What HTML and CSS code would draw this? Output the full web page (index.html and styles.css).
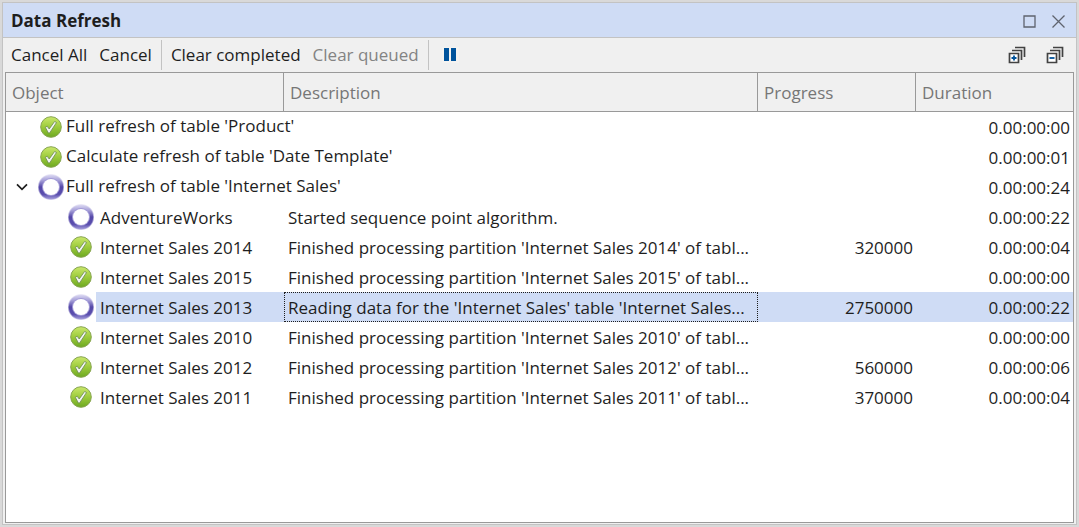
FILE: index.html
```
<!DOCTYPE html>
<html lang="en">
<head>
<meta charset="utf-8">
<title>Data Refresh</title>
<link rel="stylesheet" href="styles.css">
</head>
<body>
<svg class="defs" aria-hidden="true">
  <defs>
    <linearGradient id="green" x1="0" y1="0" x2="0" y2="1">
      <stop offset="0" stop-color="#cbe86c"/><stop offset=".5" stop-color="#9ccb3b"/><stop offset="1" stop-color="#6da821"/>
    </linearGradient>
    <linearGradient id="purple" x1="0" y1="0" x2="0" y2="1">
      <stop offset="0" stop-color="#dcd9f2"/><stop offset=".22" stop-color="#a9a3da"/><stop offset=".5" stop-color="#5548a8"/><stop offset=".8" stop-color="#5a4eae"/><stop offset="1" stop-color="#a59edb"/>
    </linearGradient>
    <symbol id="done" viewBox="0 0 26 26">
      <circle cx="13" cy="13" r="10.3" fill="url(#green)" stroke="#87a550" stroke-width="1"/>
      <path d="M7.300 13.300 9.200 12.200l2 2.800 5.400-7.500 1.900 1-6.900 10.500h-1.200z" fill="#f2f5f2" stroke="#6c8a50" stroke-width=".8" stroke-linejoin="round"/>
    </symbol>
    <symbol id="busy" viewBox="0 0 26 26">
      <circle cx="13" cy="13" r="13" fill="url(#purple)" opacity=".5"/>
      <circle cx="13" cy="13" r="12.200" fill="url(#purple)"/>
      <circle cx="13" cy="13" r="9" fill="#a39bd8"/>
      <circle cx="13" cy="13" r="8" fill="#fff"/>
    </symbol>
  </defs>
</svg>
<main class="window">
  <header class="titlebar">
    <h1 class="title">Data Refresh</h1>
    <button class="caption" aria-label="Maximize"><svg width="13" height="13" viewBox="0 0 13 13"><path d="M1 1h11v11H1z" fill="none" stroke="#5f636e" stroke-width="1.3"/></svg></button>
    <button class="caption" aria-label="Close"><svg width="13" height="13" viewBox="0 0 13 13"><path d="m.5.5 12 12m0-12-12 12" fill="none" stroke="#5f636e" stroke-width="1.3"/></svg></button>
  </header>
  <div class="toolbar">
    <button class="tool">Cancel All</button>
    <button class="tool">Cancel</button>
    <span class="divider"></span>
    <button class="tool">Clear completed</button>
    <button class="tool" disabled>Clear queued</button>
    <span class="divider"></span>
    <button class="tool pause" aria-label="Pause"><svg width="18" height="18" viewBox="0 0 18 18"><path d="M1 1h17v16H1z" fill="#f4f3f1"/><path d="M3 2h5v13H3zM10 2h5v13h-5z" fill="#00539c"/></svg></button>
    <span class="spacer"></span>
    <button class="tool tree" aria-label="Expand all"><svg width="18" height="18" viewBox="0 0 18 18" fill="none"><path d="M1.500 7.500h9v9h-9z" fill="#fff"/><path d="M1.500 7.500h9v9h-9zM4 4.500h9.500V14M7 1.500h9.500V11" stroke="#424242" stroke-width="1.700"/><path d="M3.500 12h5M6 9.500v5" stroke="#00539c" stroke-width="1.800"/></svg></button>
    <button class="tool tree" aria-label="Collapse all"><svg width="18" height="18" viewBox="0 0 18 18" fill="none"><path d="M1.500 7.500h9v9h-9z" fill="#fff"/><path d="M1.500 7.500h9v9h-9zM4 4.500h9.500V14M7 1.500h9.500V11" stroke="#424242" stroke-width="1.700"/><path d="M3.500 12h5" stroke="#00539c" stroke-width="1.800"/></svg></button>
  </div>
  <div class="list">
    <table class="grid">
      <colgroup><col class="c-object"><col><col class="c-progress"><col class="c-duration"></colgroup>
      <thead><tr><th>Object</th><th>Description</th><th>Progress</th><th>Duration</th></tr></thead>
      <tbody>
        <tr class="parent"><td><div class="node"><svg class="icon"><use href="#done"/></svg><span class="name">Full refresh of table 'Product'</span></div></td><td></td><td></td><td>0.00:00:00</td></tr>
        <tr class="parent"><td><div class="node"><svg class="icon"><use href="#done"/></svg><span class="name">Calculate refresh of table 'Date Template'</span></div></td><td></td><td></td><td>0.00:00:01</td></tr>
        <tr class="parent"><td><div class="node open"><button class="chevron" aria-label="Collapse"><svg width="12" height="8" viewBox="0 0 12 8"><path d="m1 1.300 5 5 5-5" fill="none" stroke="#1e1e1e" stroke-width="1.700"/></svg></button><svg class="icon"><use href="#busy"/></svg><span class="name">Full refresh of table 'Internet Sales'</span></div></td><td></td><td></td><td>0.00:00:24</td></tr>
        <tr><td><div class="node child"><svg class="icon"><use href="#busy"/></svg><span class="name">AdventureWorks</span></div></td><td>Started sequence point algorithm.</td><td></td><td>0.00:00:22</td></tr>
        <tr><td><div class="node child"><svg class="icon"><use href="#done"/></svg><span class="name">Internet Sales 2014</span></div></td><td>Finished processing partition 'Internet Sales 2014' of tabl...</td><td>320000</td><td>0.00:00:04</td></tr>
        <tr><td><div class="node child"><svg class="icon"><use href="#done"/></svg><span class="name">Internet Sales 2015</span></div></td><td>Finished processing partition 'Internet Sales 2015' of tabl...</td><td></td><td>0.00:00:00</td></tr>
        <tr class="selected"><td><div class="node child"><svg class="icon"><use href="#busy"/></svg><span class="name">Internet Sales 2013</span></div></td><td class="focused">Reading data for the 'Internet Sales' table 'Internet Sales...</td><td>2750000</td><td>0.00:00:22</td></tr>
        <tr><td><div class="node child"><svg class="icon"><use href="#done"/></svg><span class="name">Internet Sales 2010</span></div></td><td>Finished processing partition 'Internet Sales 2010' of tabl...</td><td></td><td>0.00:00:00</td></tr>
        <tr><td><div class="node child"><svg class="icon"><use href="#done"/></svg><span class="name">Internet Sales 2012</span></div></td><td>Finished processing partition 'Internet Sales 2012' of tabl...</td><td>560000</td><td>0.00:00:06</td></tr>
        <tr><td><div class="node child"><svg class="icon"><use href="#done"/></svg><span class="name">Internet Sales 2011</span></div></td><td>Finished processing partition 'Internet Sales 2011' of tabl...</td><td>370000</td><td>0.00:00:04</td></tr>
      </tbody>
    </table>
  </div>
</main>
</body>
</html>
```
FILE: styles.css
```
* { box-sizing: border-box; }
body {
  margin: 0;
  height: 100vh;
  padding: 2px;
  background: #d9d9d9;
  color: #1e1e1e;
  font: 17px/24px "Open Sans", "Noto Sans", sans-serif;
  display: flex;
}
.defs { position: absolute; width: 0; height: 0; }
button { border: 0; padding: 0; margin: 0; background: none; font: inherit; color: inherit; display: block; }
.window { flex: 1; min-width: 0; display: flex; flex-direction: column; border: 1px solid #c3c3c3; background: #f0f0f0; }
.titlebar { display: flex; align-items: center; gap: 16px; height: 35px; padding: 2px 11px 0 8px; background: #cfdcf5; border-bottom: 1px solid #c3c3c3; }
.title { flex: 1; margin: 0; font-size: 17px; line-height: 24px; }
.caption svg, .tool svg { display: block; }
.toolbar { display: flex; align-items: center; height: 34px; padding: 0 12px 0 8px; gap: 9px; white-space: nowrap; }
.tool + .tool { margin-left: 3px; }
.tool:disabled { color: #838383; }
.pause { margin-left: 3px; }
.divider { width: 1px; height: 30px; background: #c3c3c3; }
.spacer { flex: 1; }
.tree + .tree { margin-left: 11px; }
.list { flex: 1; margin: 0 2px 1px; border: 1px solid #999; background: #fff; overflow: hidden; }
.grid { width: 100%; table-layout: fixed; border-collapse: separate; border-spacing: 0; white-space: nowrap; }
.c-object { width: 278px; }
.c-progress { width: 158px; }
.c-duration { width: 157px; }
th { height: 39px; padding: 2px 6px 0; text-align: left; font-weight: 400; color: #767676; background: #f0f0f0; border-right: 1px solid #999; border-bottom: 1px solid #999; }
th:last-child { border-right: 0; }
td { height: 30px; padding: 2px 3px 0; text-align: right; }
td:first-child, td:nth-child(2) { text-align: left; }
td:first-child { padding: 0; }
td:nth-child(2) { padding: 2px 4px 0; overflow: hidden; }
.node { display: flex; align-items: center; height: 30px; padding-left: 32px; }
.node.open { padding-left: 10px; }
.chevron { flex: none; width: 22px; }
.chevron svg { display: block; }
.node.child { padding-left: 62px; }
.icon { flex: none; width: 26px; height: 26px; }
.parent .name { padding: 0 2px 2px; }
.child .name { flex: 1; height: 30px; line-height: 28px; margin-left: 2px; padding: 2px 0 0 4px; }
.selected td { background: #cfdcf5; }
.selected td:first-child { background: none; }
.selected .name { background: #cfdcf5; }
.selected .focused { outline: 1px dotted #1e1e1e; outline-offset: -1px; }
```
